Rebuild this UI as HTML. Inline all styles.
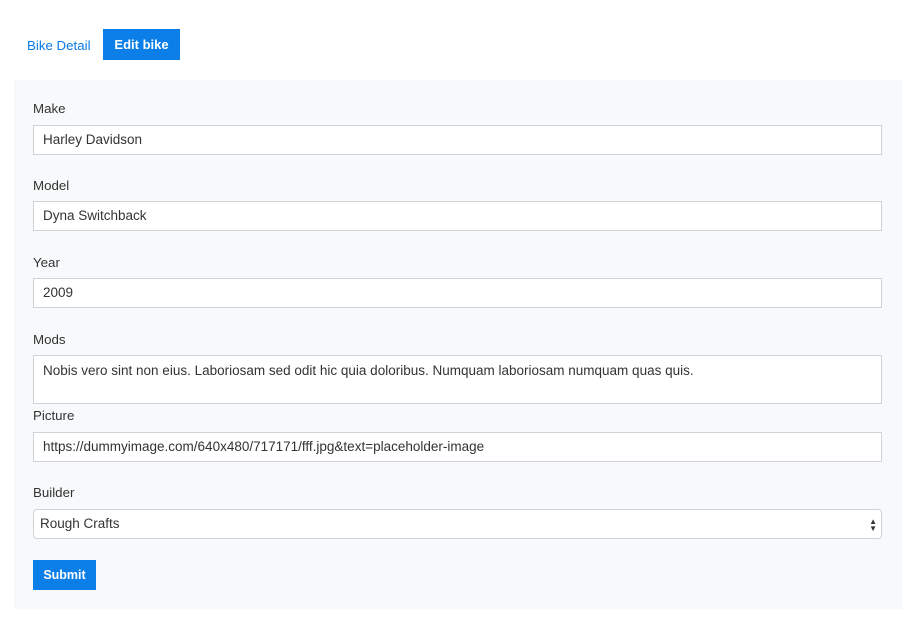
<!DOCTYPE html>
<html><head><style>
body{margin:0;background:#fff;font-family:"Liberation Sans",Arial,sans-serif;font-size:13px;color:#333;}
.a{position:absolute}
.lbl{position:absolute;left:33px;color:#333;font-size:13.3px;line-height:16px}
.inp{position:absolute;left:33px;height:28px;border:1px solid #ced4da;background:#fff;color:#333;font-size:13.5px;line-height:28px;box-sizing:content-box;padding-left:9px;width:838px;white-space:nowrap}
</style></head><body>
<div class="a" style="left:27px;top:38px;color:#0b7ae6;font-size:13.3px;line-height:16px">Bike Detail</div>
<div class="a" style="left:103px;top:29px;width:77px;height:31px;background:#0b7ee8;color:#fff;font-weight:bold;font-size:13px;line-height:32px;text-align:center">Edit bike</div>
<div class="a" style="left:14px;top:80px;width:888px;height:529px;background:#f7f9fa"></div>
<div class="lbl" style="top:101px">Make</div>
<div class="inp" style="top:125px">Harley Davidson</div>
<div class="lbl" style="top:178px">Model</div>
<div class="inp" style="top:201px">Dyna Switchback</div>
<div class="lbl" style="top:255px">Year</div>
<div class="inp" style="top:278px">2009</div>
<div class="lbl" style="top:332px">Mods</div>
<div class="inp" style="top:355px;height:47px;line-height:30px">Nobis vero sint non eius. Laboriosam sed odit hic quia doloribus. Numquam laboriosam numquam quas quis.</div>
<div class="lbl" style="top:408px">Picture</div>
<div class="inp" style="top:432px">https://dummyimage.com/640x480/717171/fff.jpg&amp;text=placeholder-image</div>
<div class="lbl" style="top:485px">Builder</div>
<div class="inp" style="top:509px;border-radius:4px;padding-left:6px;width:841px">Rough Crafts<span style="position:absolute;right:4px;top:0;font-size:8px;line-height:7px;padding-top:8px;color:#333">▲<br>▼</span></div>
<div class="a" style="left:33px;top:560px;width:63px;height:30px;background:#0b7ee8;color:#fff;font-weight:bold;font-size:12.5px;line-height:30px;text-align:center">Submit</div>
</body></html>
